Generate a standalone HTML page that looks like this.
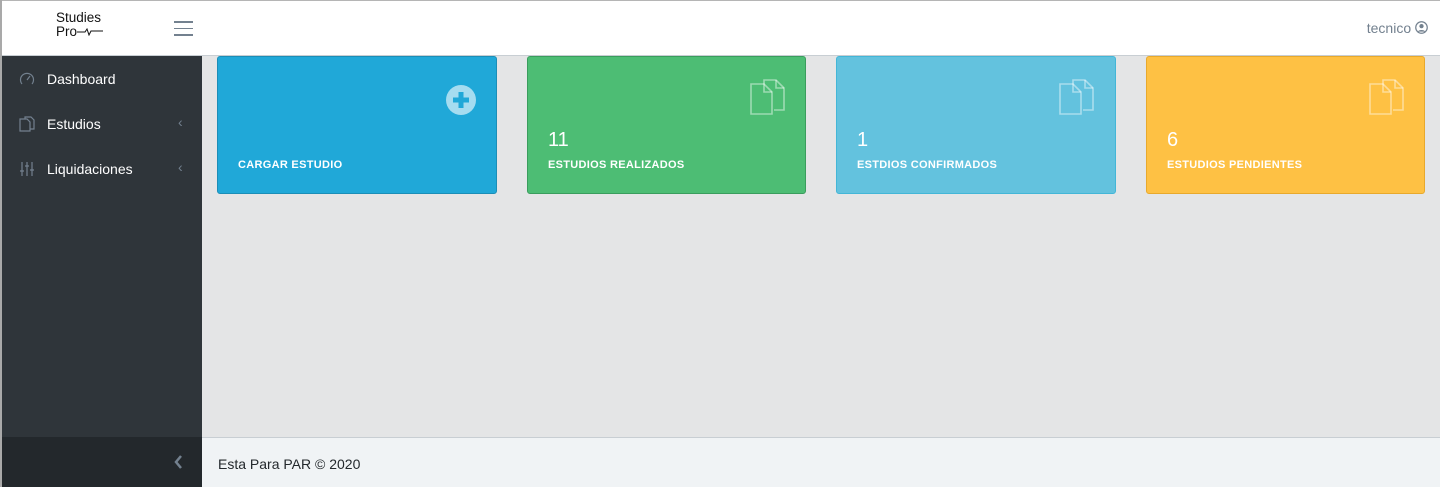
<!DOCTYPE html>
<html><head><style>
*{box-sizing:border-box;margin:0;padding:0}
body{width:1440px;height:487px;overflow:hidden;background:#e4e5e6;font-family:"Liberation Sans",sans-serif;position:relative}
.frame{position:absolute;left:0;top:0;width:2px;height:487px;background:#a9a9a9}
.topline{position:absolute;left:0;top:0;width:1440px;height:1px;background:#b5b5b5}
.header{position:absolute;left:2px;top:1px;width:1438px;height:55px;background:#fff;border-bottom:1px solid #c8ced3}
.logo{position:absolute;left:54px;top:10px;font-size:13.5px;line-height:14px;color:#111}
.ham{position:absolute;left:172px;top:20px;width:19px}
.ham div{height:1.5px;background:#73818f;margin-bottom:5px}
.user{position:absolute;right:12px;top:19px;font-size:14px;color:#73818f}
.side{position:absolute;left:2px;top:56px;width:200px;height:381px;background:#2f353a}
.item{position:absolute;left:0;width:200px;height:45px;color:#fff;font-size:14px}
.item span{position:absolute;left:45px;top:15px}
.item svg.ic{position:absolute;left:17px;top:15px}
.item .ch{position:absolute;left:176px;top:13px;color:#73818f;font-size:14px}
.sidefoot{position:absolute;left:2px;top:437px;width:200px;height:50px;background:#23282c}
.footer{position:absolute;left:202px;top:437px;width:1238px;height:50px;background:#f0f3f5;border-top:1px solid #c8ced3;font-size:14px;color:#23282c}
.footer span{position:absolute;left:16px;top:18px}
.card{position:absolute;top:56px;height:138px;border-radius:3px;color:#fff}
.card .n{position:absolute;left:20px;top:72px;font-size:20px}
.card .l{position:absolute;left:20px;top:102px;font-size:11px;font-weight:bold;letter-spacing:.3px}
.card svg{position:absolute}
</style></head><body>
<div class="topline"></div>
<div class="header">
<div class="logo">Studies<br>Pro<svg width="26" height="10" viewBox="0 0 26 10"><path d="M0 6H8L10 3L12 9L14 5H26" fill="none" stroke="#111" stroke-width="1"/></svg></div>
<div class="ham"><div></div><div></div><div></div></div>
<div class="user">tecnico <svg width="13" height="13" viewBox="0 0 14 14" style="vertical-align:-1px"><circle cx="7" cy="7" r="6.2" fill="none" stroke="#73818f" stroke-width="1.3"/><circle cx="7" cy="5.5" r="2.3" fill="#73818f"/><path d="M3 11.5C4 9 10 9 11 11.5" fill="#73818f"/></svg></div>
</div>
<div class="frame"></div>
<div class="side">
<div class="item" style="top:0"><svg class="ic" width="16" height="16" viewBox="0 0 16 16"><path d="M3 13A6.5 6.5 0 1 1 13 13" fill="none" stroke="#73818f" stroke-width="1.2"/><path d="M8 9L11 5" stroke="#73818f" stroke-width="1.2"/></svg><span>Dashboard</span></div>
<div class="item" style="top:45px"><svg class="ic" width="16" height="16" viewBox="0 0 16 16"><g fill="none" stroke="#73818f" stroke-width="1.2"><path d="M1 3H8L11 6V15H1Z"/><path d="M6 3V1H12L15 4V13H11"/></g></svg><span>Estudios</span><div class="ch">‹</div></div>
<div class="item" style="top:90px"><svg class="ic" width="16" height="16" viewBox="0 0 16 16"><g stroke="#73818f" stroke-width="1.2" fill="none"><path d="M3 1V15M8 1V15M13 1V15"/><path d="M1 10H5M6 5H10M11 9H15"/></g></svg><span>Liquidaciones</span><div class="ch">‹</div></div>
</div>
<div class="sidefoot"><svg style="position:absolute;left:171px;top:17px" width="10" height="16" viewBox="0 0 10 16"><path d="M8 2L3 8L8 14" fill="none" stroke="#73818f" stroke-width="2.5"/></svg></div>
<div class="footer"><span>Esta Para PAR © 2020</span></div>

<div class="card" style="left:217px;width:280px;background:#20a8d8;border:1px solid #1b8eb7">
<svg style="left:228px;top:28px" width="30" height="30" viewBox="0 0 30 30"><circle cx="15" cy="15" r="15" fill="#a5dcf0"/><path d="M15 7V23M7 15H23" stroke="#20a8d8" stroke-width="5"/></svg>
<div class="l">CARGAR ESTUDIO</div></div>

<div class="card" style="left:527px;width:279px;background:#4dbd74;border:1px solid #3a9d5d">
<svg style="left:222px;top:22px" width="38" height="36" viewBox="0 0 38 36"><g fill="none" stroke="rgba(255,255,255,.45)" stroke-width="1.6"><path d="M14 5V1H26L34 9V31H24"/><path d="M26 1V9H34"/><path d="M1 5H14L22 13V35H1Z"/><path d="M14 5V13H22"/></g></svg>
<div class="n">11</div><div class="l">ESTUDIOS REALIZADOS</div></div>

<div class="card" style="left:836px;width:280px;background:#63c2de;border:1px solid #43b6d7">
<svg style="left:222px;top:22px" width="38" height="36" viewBox="0 0 38 36"><g fill="none" stroke="rgba(255,255,255,.45)" stroke-width="1.6"><path d="M14 5V1H26L34 9V31H24"/><path d="M26 1V9H34"/><path d="M1 5H14L22 13V35H1Z"/><path d="M14 5V13H22"/></g></svg>
<div class="n">1</div><div class="l">ESTDIOS CONFIRMADOS</div></div>

<div class="card" style="left:1146px;width:279px;background:#fec144;border:1px solid #e8a92c">
<svg style="left:222px;top:22px" width="38" height="36" viewBox="0 0 38 36"><g fill="none" stroke="rgba(255,255,255,.45)" stroke-width="1.6"><path d="M14 5V1H26L34 9V31H24"/><path d="M26 1V9H34"/><path d="M1 5H14L22 13V35H1Z"/><path d="M14 5V13H22"/></g></svg>
<div class="n">6</div><div class="l">ESTUDIOS PENDIENTES</div></div>
</body></html>
